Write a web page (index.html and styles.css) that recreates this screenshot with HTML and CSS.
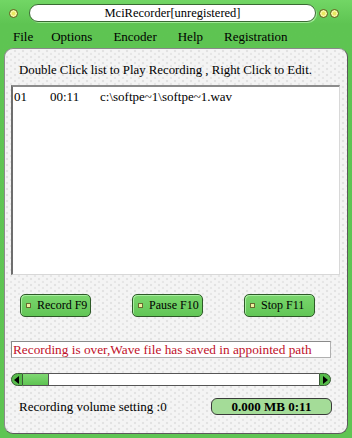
FILE: index.html
```
<!DOCTYPE html>
<html>
<head>
<meta charset="utf-8">
<link rel="stylesheet" href="styles.css">
</head>
<body>
<div class="window">
  <div class="titlebar">
    <span class="knob"></span>
    <div class="title">MciRecorder[unregistered]</div>
    <div class="knobs"><span class="knob"></span><span class="knob"></span></div>
  </div>
  <div class="menubar">
    <span class="menu m-file">File</span>
    <span class="menu m-options">Options</span>
    <span class="menu m-encoder">Encoder</span>
    <span class="menu m-help">Help</span>
    <span class="menu m-reg">Registration</span>
  </div>
  <div class="panel">
    <div class="hint">Double Click list to Play Recording , Right Click to Edit.</div>
    <div class="list">
      <div class="row"><span class="c1">01</span><span class="c2">00:11</span><span class="c3">c:\softpe~1\softpe~1.wav</span></div>
    </div>
    <div class="buttons">
      <button class="btn"><span class="dot"></span><span class="lbl">Record F9</span></button>
      <button class="btn"><span class="dot"></span><span class="lbl">Pause F10</span></button>
      <button class="btn"><span class="dot"></span><span class="lbl">Stop F11</span></button>
    </div>
    <div class="status">Recording is over,Wave file has saved in appointed path</div>
    <div class="scroll">
      <span class="arrow left"><svg width="6" height="8" viewBox="0 0 6 8"><path d="M5 0 L0 4 L5 8 Z" fill="#000"/></svg></span>
      <span class="thumb"></span>
      <span class="track"></span>
      <span class="arrow right"><svg width="6" height="8" viewBox="0 0 6 8"><path d="M1 0 L6 4 L1 8 Z" fill="#000"/></svg></span>
    </div>
    <div class="bottom">
      <span class="vol">Recording volume setting :0</span>
      <span class="pill">0.000 MB 0:11</span>
    </div>
  </div>
</div>
</body>
</html>
```
FILE: styles.css
```
html, body {
  margin: 0;
  padding: 0;
}
body {
  width: 352px;
  height: 438px;
  overflow: hidden;
  font-family: "Liberation Serif", "Times New Roman", serif;
  color: #000;
  background: #5cc04f;
}
.window {
  width: 352px;
  height: 438px;
  display: flex;
  flex-direction: column;
  background: linear-gradient(#72d665 0px, #5ec452 24px, #5fc553 100%);
}
.titlebar {
  height: 26px;
  display: flex;
  align-items: center;
  padding: 0 5px 0 9px;
  box-sizing: border-box;
}
.knob {
  display: inline-block;
  width: 9px;
  height: 9px;
  border-radius: 50%;
  background: #e8e860;
  border: 1px solid #5a5a20;
  box-shadow: inset 0 0 0 1.5px #f8f8a8;
  box-sizing: border-box;
}
.title {
  margin-left: 11px;
  width: 287px;
  height: 18px;
  box-sizing: border-box;
  background: #fff;
  border: 1px solid #3a6a33;
  border-radius: 9px;
  font-size: 12.5px;
  line-height: 16px;
  text-align: center;
  box-shadow: 1px 1px 0 #9ee894;
}
.knobs {
  margin-left: 3px;
  display: flex;
  gap: 2px;
}
.menubar {
  height: 21px;
  display: flex;
  align-items: center;
  font-size: 13px;
}
.menu { display: inline-block; }
.m-file { margin-left: 13px; }
.m-options { margin-left: 18px; }
.m-encoder { margin-left: 21px; }
.m-help { margin-left: 21px; }
.m-reg { margin-left: 21px; }
.panel {
  flex: 1;
  margin: 1px 4px 4px 4px;
  border: 1px solid #5a5a5a;
  border-top-color: #8a8a8a;
  border-left-color: #8a8a8a;
  border-radius: 9px;
  background-color: #f4f4f4;
  background-image:
    radial-gradient(circle at 2px 2px, #e2e2e2 1px, transparent 1.6px),
    radial-gradient(circle at 6px 5px, #e6e6e6 1px, transparent 1.6px);
  background-size: 8px 6px, 8px 6px;
  padding: 0 6px;
  display: flex;
  flex-direction: column;
}
.hint {
  padding-top: 13px;
  line-height: 16px;
  font-size: 12.8px;
  padding-left: 8px;
  margin-bottom: 7px;
  white-space: nowrap;
}
.list {
  height: 190px;
  width: 329px;
  box-sizing: border-box;
  background: #fff;
  border-top: 2px solid #8c8c8c;
  border-left: 2px solid #6e6e6e;
  border-right: 1px solid #d8d8d8;
  border-bottom: 1px solid #d8d8d8;
  padding: 2px 0 0 1px;
  font-size: 13px;
}
.row { display: flex; line-height: 15px; }
.c1 { width: 36px; }
.c2 { width: 50px; }
.buttons {
  margin-top: 19px;
  padding-left: 9px;
  display: flex;
  gap: 41px;
}
.btn {
  width: 71px;
  height: 23px;
  box-sizing: border-box;
  border: 1px solid #2e5a28;
  border-radius: 5px;
  background: linear-gradient(#7ad66d, #62c656);
  font-family: "Liberation Serif", "Times New Roman", serif;
  font-size: 12px;
  color: #000;
  padding: 0 0 0 5px;
  display: flex;
  align-items: center;
  gap: 6px;
  white-space: nowrap;
  box-shadow: inset 1px 1px 0 #a8eea0;
}
.lbl { white-space: nowrap; }
.dot {
  flex: none;
  width: 3px;
  height: 3px;
  background: #f0f0a0;
  border: 1px solid #6a6a30;
  box-sizing: content-box;
}
.status {
  margin-top: 24px;
  width: 320px;
  height: 17px;
  box-sizing: border-box;
  background: #fff;
  border: 1px solid #b0b0b0;
  border-top-color: #8a8a8a;
  border-left-color: #8a8a8a;
  color: #c0102a;
  font-size: 13.3px;
  line-height: 15px;
  padding-left: 1px;
  white-space: nowrap;
}
.scroll {
  margin-top: 15px;
  width: 320px;
  height: 13px;
  display: flex;
  align-items: stretch;
}
.arrow {
  width: 12px;
  background: #56bb4a;
  border: 1px solid #3a5a36;
  box-sizing: border-box;
  display: flex;
  align-items: center;
  justify-content: center;
}
.arrow.left { border-radius: 7px 0 0 7px; }
.arrow.right { border-radius: 0 7px 7px 0; }
.thumb {
  width: 26px;
  background: linear-gradient(#80d873, #5ec452);
  border-top: 1px solid #555;
  border-bottom: 1px solid #555;
  border-right: 1px solid #555;
  box-sizing: border-box;
}
.track {
  flex: 1;
  background: #fff;
  border-top: 1px solid #555;
  border-bottom: 1px solid #555;
  box-sizing: border-box;
}
.bottom {
  margin-top: 12px;
  display: flex;
  align-items: center;
  height: 17px;
}
.vol {
  padding-left: 8px;
  font-size: 13px;
  width: 192px;
}
.pill {
  width: 121px;
  height: 17px;
  box-sizing: border-box;
  border: 1px solid #3a3a3a;
  border-radius: 6px;
  background: #a4dc98;
  font-weight: bold;
  font-size: 13px;
  text-align: center;
  line-height: 15px;
}
```
